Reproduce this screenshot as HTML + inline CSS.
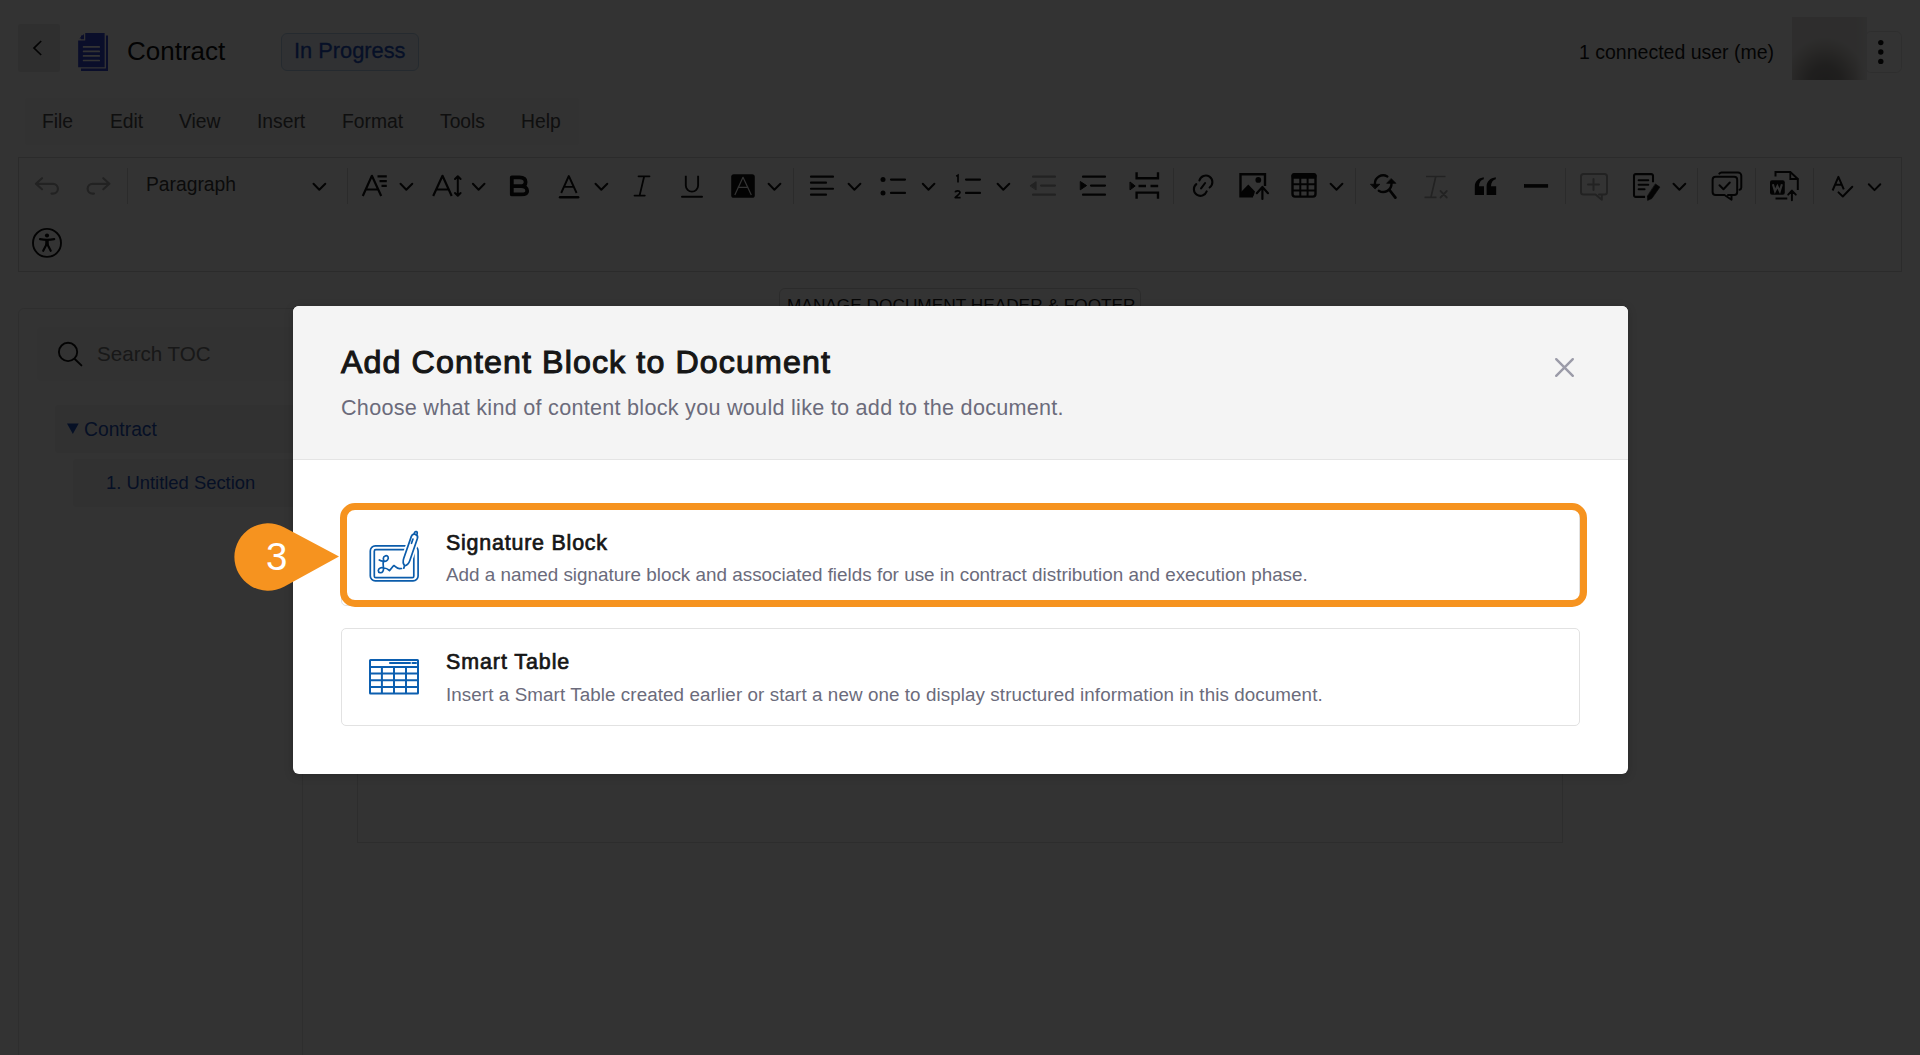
<!DOCTYPE html>
<html><head><meta charset="utf-8">
<style>
*{box-sizing:border-box;margin:0;padding:0}
html,body{width:1920px;height:1055px;overflow:hidden;background:#fff;font-family:"Liberation Sans",sans-serif;color:#161616}
.abs{position:absolute}
.t{position:absolute;white-space:nowrap;line-height:1}
#overlay{position:absolute;left:0;top:0;width:1920px;height:1055px;background:rgba(0,0,0,0.8)}
.sep{position:absolute;top:168px;width:1px;height:36px;background:#d6d6d6}
.chev{position:absolute;top:182px}
svg{position:absolute;overflow:visible}
</style></head><body>
<!-- ===== Page (under overlay) ===== -->
<div id="page">
  <!-- header -->
  <div class="abs" style="left:18px;top:24px;width:42px;height:48px;background:#ebebeb;border-radius:2px"></div>
  <svg style="left:18px;top:24px" width="42" height="48" viewBox="0 0 42 48"><path d="M23.2 17 L16 24.1 L23.2 31" fill="none" stroke="#111" stroke-width="1.7"/></svg>
  <div class="t" style="left:127px;top:38px;font-size:26px;color:#111">Contract</div>
  <div class="abs" style="left:281px;top:33px;width:138px;height:38px;border:1px solid #b9d2ea;background:#eef4fc;border-radius:6px"></div>
  <div class="t" style="left:294px;top:40px;font-size:21.8px;color:#1f4fc0;-webkit-text-stroke:0.3px #1f4fc0">In Progress</div>
  <div class="t" style="left:1579px;top:42.5px;font-size:19.5px;color:#161616">1 connected user (me)</div>

  <!-- doc icon -->
  <svg style="left:0;top:0" width="200" height="100" viewBox="0 0 200 100">
    <path d="M81 35.5 H108 V71 H81 Z" fill="#3545d0"/>
    <path d="M84.6 32.4 H105.3 V67.9 H77.5 V39.9 H84.6 Z" fill="#3545d0" stroke="#fff" stroke-width="1.3" stroke-linejoin="round"/>
    <path d="M79.4 38.4 L83.9 33.9 V38.4 Z" fill="#3545d0"/>
    <path d="M83.6 46.9 H99.2 M83.6 51.4 H99.2 M83.6 55.9 H99.2 M83.6 60.5 H99.2" stroke="#fff" stroke-width="1.7" stroke-linecap="round"/>
  </svg>
  <!-- avatar -->
  <div class="abs" style="left:1865px;top:31px;width:37px;height:42px;border:1px solid #e6e6e6;border-radius:6px"></div>
  <div class="abs" style="left:1792px;top:17px;width:75px;height:63px;background:radial-gradient(ellipse 42px 48px at 33px 68px,#8c8a88 0%,#9e9a97 40%,#d0ccc8 80%,#e4e2e0 100%)"></div>
  <div class="abs" style="left:1856px;top:17px;width:11px;height:63px;background:linear-gradient(90deg,rgba(240,240,240,0) 0%,rgba(240,240,240,0.6) 100%)"></div>
  <svg style="left:0;top:0" width="1920" height="100" viewBox="0 0 1920 100"><circle cx="1880.8" cy="42.6" r="2.7" fill="#111"/><circle cx="1880.8" cy="52" r="2.7" fill="#111"/><circle cx="1880.8" cy="61.4" r="2.7" fill="#111"/></svg>
  <!-- menu -->
  <div class="abs" style="left:25px;top:98px;width:554px;height:47px;background:#f7f7f7;border-radius:3px"></div>
  <div class="t" style="left:42px;top:112px;font-size:19.3px;color:#4a4a4a">File</div>
  <div class="t" style="left:110px;top:112px;font-size:19.3px;color:#4a4a4a">Edit</div>
  <div class="t" style="left:179px;top:112px;font-size:19.3px;color:#4a4a4a">View</div>
  <div class="t" style="left:257px;top:112px;font-size:19.3px;color:#4a4a4a">Insert</div>
  <div class="t" style="left:342px;top:112px;font-size:19.3px;color:#4a4a4a">Format</div>
  <div class="t" style="left:440px;top:112px;font-size:19.3px;color:#4a4a4a">Tools</div>
  <div class="t" style="left:521px;top:112px;font-size:19.3px;color:#4a4a4a">Help</div>
  <!-- toolbar -->
  <div class="abs" style="left:18px;top:157px;width:1884px;height:115px;border:1px solid #d8d8d8"></div>
  <div class="t" style="left:146px;top:175px;font-size:19.3px;color:#3a3a3a">Paragraph</div>
  <div class="sep" style="left:127px"></div>
  <div class="sep" style="left:347px"></div>
  <div class="sep" style="left:793px"></div>
  <div class="sep" style="left:1173px"></div>
  <div class="sep" style="left:1355px"></div>
  <div class="sep" style="left:1565px"></div>
  <div class="sep" style="left:1697px"></div>
  <div class="sep" style="left:1755px"></div>
  <div class="sep" style="left:1813px"></div>

  <svg style="left:0;top:0" width="1920" height="300" viewBox="0 0 1920 300" fill="none" stroke="#111" stroke-width="2" stroke-linecap="round" stroke-linejoin="round">
    <!-- undo / redo (disabled) -->
    <g stroke="#a8a8a8">
      <path d="M42 178.2 L35.9 183.8 L42 189.3 M35.9 183.8 H53 A4.9 4.9 0 0 1 53 193.6 H51.5" stroke-width="2.2"/>
      <path d="M103.3 178.2 L109.4 183.8 L103.3 189.3 M109.4 183.8 H92.5 A4.9 4.9 0 0 0 92.5 193.6 H94" stroke-width="2.2"/>
    </g>
    <!-- paragraph chevron -->
    <path d="M313.5 183.8 L319.3 189.8 L325.3 183.8"/>
    <!-- font size -->
    <path d="M362.8 196 L371.9 175.8 L381.2 196 M365.8 189.5 H378.4" stroke-width="2.2" stroke-linecap="butt"/>
    <path d="M377.5 176.3 H386.8 M379.5 181.1 H386.8 M381.5 185.8 H386.8" stroke-width="2.3" stroke-linecap="butt"/>
    <path d="M400.5 183.8 L406.3 189.8 L412.3 183.8"/>
    <!-- line height -->
    <path d="M433.2 196 L442.5 175.8 L451.7 196 M436.3 189.5 H448.8" stroke-width="2.2" stroke-linecap="butt"/>
    <path d="M457.8 176.5 V195.5 M455 179 L457.8 176.2 L460.6 179 M455 193 L457.8 195.8 L460.6 193" stroke-width="2"/>
    <path d="M472.9 183.8 L478.6 189.8 L484.5 183.8"/>
    <!-- bold -->
    <path d="M511.8 177.3 H519.5 C523.8 177.3 525.6 179.4 525.6 182 C525.6 184.6 523.6 186.2 520.5 186.2 H511.8 Z M511.8 186.2 H521 C524.8 186.2 527.2 188.3 527.2 190.9 C527.2 193.6 525 194.4 521.5 194.4 H511.8 Z" stroke-width="3.8" stroke-linejoin="round"/>
    <!-- text color A -->
    <path d="M561.2 193 L568.8 176 L576.6 193 M564 186.9 H573.7" stroke-width="1.9" stroke-linecap="butt"/>
    <path d="M560 197.3 H578.2" stroke-width="2.4"/>
    <path d="M595.5 183.8 L601.3 189.8 L607.3 183.8"/>
    <!-- italic -->
    <path d="M638.5 176.3 H649.5 M634.5 195.6 H644.8 M644.2 176.3 L639.6 195.6" stroke-width="1.8"/>
    <!-- underline -->
    <path d="M685.8 175.8 V185.5 A6.15 6.15 0 0 0 698.1 185.5 V175.8" stroke-width="1.9" stroke-linecap="butt"/>
    <path d="M682 196.8 H702" stroke-width="2"/>
    <!-- highlight -->
    <rect x="731.2" y="174.2" width="23.6" height="23.6" rx="2.6" fill="#111" stroke="none"/>
    <path d="M734.8 195 L743 177.3 L751.3 195 M737.6 187.4 H748.4" stroke="#fff" stroke-width="1.2" stroke-linecap="butt"/>
    <path d="M768.6 183.8 L774.4 189.8 L780.4 183.8"/>
    <!-- align left -->
    <path d="M811 176.7 H833 M811 182.7 H826 M811 188.75 H833 M811 194.7 H826" stroke-width="2.2"/>
    <path d="M848.6 183.8 L854.4 189.8 L860.4 183.8"/>
    <!-- bullet list -->
    <circle cx="883" cy="179.6" r="2.5" fill="#111" stroke="none"/>
    <circle cx="883" cy="193.1" r="2.5" fill="#111" stroke="none"/>
    <path d="M891 179.6 H905 M891 192.9 H905" stroke-width="2.2"/>
    <path d="M922.8 183.8 L928.5 189.8 L934.4 183.8"/>
    <!-- numbered list -->
    <path d="M956.2 176.3 L958 175.2 V182.6" stroke-width="1.7" stroke-linecap="butt" stroke-linejoin="miter"/>
    <path d="M955.3 192.3 C955.5 190.5 960 190 960 192.6 C960 194 957 195.5 955.2 197.6 H960.6" stroke-width="1.7" stroke-linecap="butt"/>
    <path d="M966 179.6 H980 M966 192.9 H980" stroke-width="2.2"/>
    <path d="M997.6 183.8 L1003.3 189.8 L1009.3 183.8"/>
    <!-- outdent (disabled) -->
    <g stroke="#a8a8a8">
      <path d="M1033 176.7 H1055 M1041 185.6 H1055 M1033 194.7 H1055" stroke-width="2.2"/>
      <path d="M1030.3 185.6 L1036.1 181.7 V189.6 Z" fill="#a8a8a8" stroke-width="1"/>
    </g>
    <!-- indent -->
    <path d="M1083 176.7 H1105 M1091 185.6 H1105 M1083 194.7 H1105" stroke-width="2.2"/>
    <path d="M1080.6 181.7 L1086.6 185.6 L1080.6 189.6 Z" fill="#111" stroke-width="1"/>
    <!-- page break -->
    <path d="M1136.6 172.3 V178.3 H1158 V172.3 M1136.6 198.7 V192.6 H1158 V198.7" stroke-width="2.4" stroke-linecap="butt" stroke-linejoin="miter"/>
    <path d="M1138.5 186 H1146 M1150.5 186 H1158.2" stroke-width="2.4" stroke-linecap="butt"/>
    <path d="M1130.3 182.2 L1135.2 186 L1130.3 189.6 Z" fill="#111" stroke-width="1"/>
    <!-- link -->
    <path d="M1196.3 184.1 A6.6 6.6 0 1 0 1206.7 191.4" stroke-width="2.1"/>
    <path d="M1199.4 180.4 A6.6 6.6 0 1 1 1209.6 187.5" stroke-width="2.1"/>
    <path d="M1205.1 183 L1201.1 188.4" stroke-width="2.1"/>
    <!-- image upload -->
    <path d="M1253 196.2 H1240.5 V174.3 H1265 V186" stroke-width="2.4" stroke-linecap="butt" stroke-linejoin="miter"/>
    <circle cx="1258.3" cy="179.9" r="2.9" fill="#111" stroke="none"/>
    <path d="M1240.5 196.2 V192.5 L1248.3 184.6 L1255 191.5 L1253.5 196.2 Z" fill="#111" stroke="none"/>
    <path d="M1262.4 187.5 V199 M1256.8 193.2 L1262.4 186.9 L1268 193.2" stroke-width="2.2"/>
    <!-- table -->
    <rect x="1292.5" y="174.3" width="23" height="22.3" rx="2.5" stroke-width="2.4"/>
    <rect x="1291.5" y="173.2" width="25" height="5.5" rx="2" fill="#111" stroke="none"/>
    <path d="M1300.3 178 V196.5 M1307.6 178 V196.5 M1292.5 184.3 H1315.5 M1292.5 190.5 H1315.5" stroke-width="2" stroke-linecap="butt"/>
    <path d="M1330.6 183.8 L1336.5 189.8 L1342.4 183.8"/>
    <!-- find replace -->
    <path d="M1387.35 176.46 A8.3 8.3 0 0 0 1374.9 184" stroke-width="2.4" stroke-linecap="round"/>
    <path d="M1378.8 190.7 A8.3 8.3 0 0 0 1391.5 183.3" stroke-width="2.4" stroke-linecap="round"/>
    <path d="M1370.8 184.25 H1379.9 L1375.3 188.8 Z M1387 183.3 H1395.9 L1391.4 178.8 Z" fill="#111" stroke-width="0.8" stroke-linejoin="miter"/>
    <path d="M1389.5 190 L1395.4 197.6" stroke-width="2.8"/>
    <!-- clear formatting (disabled) -->
    <g stroke="#a8a8a8">
      <path d="M1426 176.5 H1445.5 M1435.8 176.5 L1431 197 M1424.5 197.3 H1436.5" stroke-width="1.7" stroke-linecap="butt"/>
      <path d="M1440.5 191 L1446.8 197.5 M1446.8 191 L1440.5 197.5" stroke-width="1.8"/>
    </g>
    <!-- quote -->
    <path d="M1474.8 195 V186.5 C1474.8 181 1478.5 178 1483.8 177.2 V179.3 C1481 180 1479 182.5 1479 186.3 H1484 V195 Z M1486.6 195 V186.5 C1486.6 181 1490.3 178 1495.8 177.2 V179.3 C1493 180 1491 182.5 1491 186.3 H1496.2 V195 Z" fill="#111" stroke="none"/>
    <!-- hr -->
    <path d="M1524 185.9 H1548.1" stroke-width="3.6" stroke-linecap="butt"/>
    <!-- add comment (disabled) -->
    <g stroke="#a8a8a8">
      <path d="M1599 194.5 H1604.5 A2.5 2.5 0 0 0 1607 192 V176.5 A2.5 2.5 0 0 0 1604.5 174 H1583.5 A2.5 2.5 0 0 0 1581 176.5 V192 A2.5 2.5 0 0 0 1583.5 194.5 H1595.5 L1601.8 199.8 V194.5" stroke-width="2"/>
      <path d="M1593.5 178.9 V189.9 M1588 184.4 H1599" stroke-width="2"/>
    </g>
    <!-- track changes -->
    <path d="M1653 182.3 V175.8 A1.7 1.7 0 0 0 1651.3 174.1 H1635.7 A1.7 1.7 0 0 0 1634 175.8 V195.2 A1.7 1.7 0 0 0 1635.7 196.9 H1645.1" stroke-width="2.1" stroke-linecap="butt"/>
    <path d="M1638.6 180.3 H1648.3 M1638.6 184.7 H1648.3 M1638.6 189.2 H1644.6" stroke-width="2"/>
    <path d="M1655.6 184.1 L1659.9 187.1 L1651.8 198.6 L1647.6 200.4 L1647.4 196.3 Z" fill="#111" stroke-width="0.6"/>
    <path d="M1673.5 183.8 L1679.4 189.8 L1685.3 183.8"/>
    <!-- comments -->
    <path d="M1719.3 173.6 A3 3 0 0 1 1721.5 172.5 H1738 A3.3 3.3 0 0 1 1741.3 175.8 V187.5 A2.3 2.3 0 0 1 1739.5 189.7" stroke-width="2"/>
    <path d="M1728 195 H1734.2 A3 3 0 0 0 1737.2 192 V179.8 A3 3 0 0 0 1734.2 176.8 H1715.6 A3 3 0 0 0 1712.6 179.8 V192 A3 3 0 0 0 1715.6 195 H1724.5 L1731.5 199.8 V195" stroke-width="2"/>
    <path d="M1719.5 185.2 L1723.5 189.3 L1729.8 182.5" stroke-width="2"/>
    <!-- word import -->
    <path d="M1775.5 176.6 V171.9 H1790.3 L1797.8 179 V190 M1775.5 198.4 H1787.3" stroke-width="2" stroke-linejoin="miter" stroke-linecap="butt"/>
    <path d="M1790.3 172 V179 H1797.6" stroke-width="1.8" stroke-linejoin="miter"/>
    <rect x="1770" y="180.3" width="14.8" height="14.5" rx="2" fill="#111" stroke="none"/>
    <path d="M1772.9 184.3 L1775 191.2 L1777.4 186.2 L1779.8 191.2 L1781.9 184.3" stroke="#fff" stroke-width="2.1" stroke-linecap="butt" stroke-linejoin="miter"/>
    <path d="M1791.9 190.8 V200.3 M1788.2 194.6 L1791.9 190.6 L1795.8 194.6" stroke-width="2"/>
    <!-- spellcheck -->
    <path d="M1832.6 190.5 L1838.4 176.8 L1843.8 189.3 M1834.8 184.7 H1842" stroke-width="2" stroke-linecap="butt"/>
    <path d="M1838.5 192.4 L1842.8 196.5 L1852.3 186.7" stroke-width="2"/>
    <path d="M1868.8 184.2 L1874.5 190.1 L1880.3 184.2"/>
    <!-- accessibility -->
    <circle cx="47" cy="242.9" r="14" stroke-width="1.9"/>
    <circle cx="47" cy="235.5" r="2.1" fill="#111" stroke="none"/>
    <path d="M40 239.2 Q47 240.5 54.2 239.2" stroke-width="2.2"/>
    <path d="M47 240 V245.5" stroke-width="3.5" stroke-linecap="butt"/>
    <path d="M43.2 250.8 L47 243.5 L50.7 250.8" stroke-width="2.2"/>
  </svg>
  <!-- sidebar -->
  <div class="abs" style="left:18px;top:308px;width:285px;height:800px;border:1px solid #e6e6e6;border-radius:6px"></div>
  <div class="abs" style="left:37px;top:327px;width:260px;height:54px;background:#f8f8f8;border-radius:4px"></div>
  <svg style="left:0;top:0" width="300" height="400" viewBox="0 0 300 400" fill="none" stroke="#111" stroke-width="1.9" stroke-linecap="round"><circle cx="68.05" cy="351.95" r="9.15"/><path d="M75 359.2 L81.4 365.4"/></svg>
  <div class="t" style="left:97px;top:344px;font-size:20.6px;color:#777">Search TOC</div>
  <div class="abs" style="left:55px;top:405px;width:240px;height:48px;background:#f3f4f6;border-radius:3px"></div>
  <svg style="left:0;top:0" width="300" height="500" viewBox="0 0 300 500"><path d="M67 423.6 H78.7 L72.85 434 Z" fill="#1f4fb8"/></svg>
  <div class="t" style="left:84px;top:420px;font-size:19.3px;color:#1f4fb8">Contract</div>
  <div class="abs" style="left:73px;top:459px;width:222px;height:48px;background:#f3f4f6;border-radius:3px"></div>
  <div class="t" style="left:106px;top:474px;font-size:18.4px;color:#1f4fb8">1. Untitled Section</div>
  <!-- document -->
  <div class="abs" style="left:779px;top:288px;width:362px;height:40px;border:1px solid #d8d8d8;border-radius:6px"></div>
  <div class="t" style="left:787px;top:296.5px;font-size:17.25px;color:#222">MANAGE DOCUMENT HEADER &amp; FOOTER</div>
  <div class="abs" style="left:357px;top:340px;width:1206px;height:503px;border:1px solid #e2e2e2"></div>
</div>
<div id="overlay"></div>
<!-- ===== Modal ===== -->
<div id="modal" class="abs" style="left:293px;top:306px;width:1335px;height:468px;background:#fff;border-radius:6px;overflow:hidden;box-shadow:0 2px 10px rgba(0,0,0,0.2)">
  <div class="abs" style="left:0;top:0;width:1335px;height:154px;background:#f4f4f4;border-bottom:1px solid #e4e4e4"></div>
  <div class="t" style="left:48px;top:40px;font-size:32.2px;letter-spacing:1.1px;-webkit-text-stroke:1.1px #161616;color:#161616">Add Content Block to Document</div>
  <div class="t" style="left:48px;top:91px;font-size:21.6px;letter-spacing:0.27px;color:#6b6b7b">Choose what kind of content block you would like to add to the document.</div>
  <svg style="left:1262px;top:52px" width="19" height="19" viewBox="0 0 19 19"><path d="M1.2 1.2L17.8 17.8M17.8 1.2L1.2 17.8" stroke="#9b9ba8" stroke-width="2.4" stroke-linecap="round"/></svg>

  <!-- signature icon -->
  <svg style="left:71px;top:222px" width="60" height="60" viewBox="0 0 60 60" fill="none" stroke="#0b5cab" stroke-width="1.7" stroke-linecap="round" stroke-linejoin="round">
    <rect x="6.3" y="17.9" width="47.8" height="35" rx="5"/>
    <rect x="10.3" y="21.7" width="39.5" height="28" rx="1.5"/>
    <path d="M15.3 32 C17 33 18.5 33.5 20 33 M20.5 33.5 C19 32 18.5 28.5 21.5 27.8 C24 27.3 25.2 30 23.5 32 C22.5 33.2 21 33.5 19.8 33.2 M19.2 33.5 C19 36 19.3 38 19.5 40 M19.6 40 C17.5 39 14.5 40 14.3 42.5 C14.2 45 17.5 45.5 18.8 43.5 C19.5 42.5 19.6 41 19.5 40 C21.5 39.8 23.5 40.8 25.5 42.5 C27 41.2 28.5 38.5 30 37.6 C31.5 38.5 33 40.5 35.5 40.7 L37.5 40.5" stroke-width="1.7"/>
    <g transform="rotate(19 45 25)">
      <path d="M41.8 8.5 A3.2 3.2 0 0 1 48.2 8.5 V32 C48.2 35 46.5 37.5 45 38.5 C43.5 37.5 41.8 35 41.8 32 Z" fill="#fff" stroke="#fff" stroke-width="5"/>
      <path d="M41.8 8.5 A3.2 3.2 0 0 1 48.2 8.5 V32 C48.2 35 46.5 37.5 45 38.5 C43.5 37.5 41.8 35 41.8 32 Z" fill="#fff"/>
      <path d="M43.6 5.3 V3.8 A1.4 1.4 0 0 1 46.4 3.8 V5.3"/>
      <path d="M44.2 10.5 V15"/>
      <path d="M45 38.5 V41"/>
    </g>
  </svg>
  <!-- table icon -->
  <svg style="left:71px;top:348px" width="56" height="42" viewBox="0 0 56 42" fill="none" stroke="#0c5fb0" stroke-width="2" stroke-linecap="butt">
    <rect x="6" y="6" width="48" height="33.5" rx="0.5"/>
    <path d="M6 12.9 H54 M6 19.4 H54 M6 26.2 H54 M6 33 H54 M17.9 12.9 V39.5 M30 12.9 V39.5 M42 12.9 V39.5"/>
    <path d="M26 9 H46 M48.5 9 H52" stroke-width="2.1" stroke-linecap="round"/>
  </svg>
  <!-- card 1 -->
  <div class="abs" style="left:48px;top:202px;width:1239px;height:98px;border:1px solid #e2e2e2;border-radius:5px"></div>
  <div class="t" style="left:153px;top:227px;font-size:21.4px;letter-spacing:0.8px;-webkit-text-stroke:0.7px #161616;color:#161616">Signature Block</div>
  <div class="t" style="left:153px;top:260px;font-size:18.88px;color:#6b6b7b">Add a named signature block and associated fields for use in contract distribution and execution phase.</div>
  <!-- card 2 -->
  <div class="abs" style="left:48px;top:322px;width:1239px;height:98px;border:1px solid #e2e2e2;border-radius:5px"></div>
  <div class="t" style="left:153px;top:346px;font-size:21.4px;letter-spacing:0.95px;-webkit-text-stroke:0.7px #161616;color:#161616">Smart Table</div>
  <div class="t" style="left:153px;top:380px;font-size:18.8px;letter-spacing:0.09px;color:#6b6b7b">Insert a Smart Table created earlier or start a new one to display structured information in this document.</div>
</div>
<!-- highlight -->
<div class="abs" style="left:340px;top:503px;width:1247px;height:104px;border:7px solid #f6931f;border-radius:15px"></div>
<svg style="left:0;top:0" width="1920" height="1055"><path d="M284 527.3 A33.7 33.7 0 1 0 284 586.7 L339 556.5 Z" fill="#f6931f"/></svg>
<div class="t" style="left:266px;top:537.5px;font-size:38.5px;color:#fff">3</div>
</body></html>
